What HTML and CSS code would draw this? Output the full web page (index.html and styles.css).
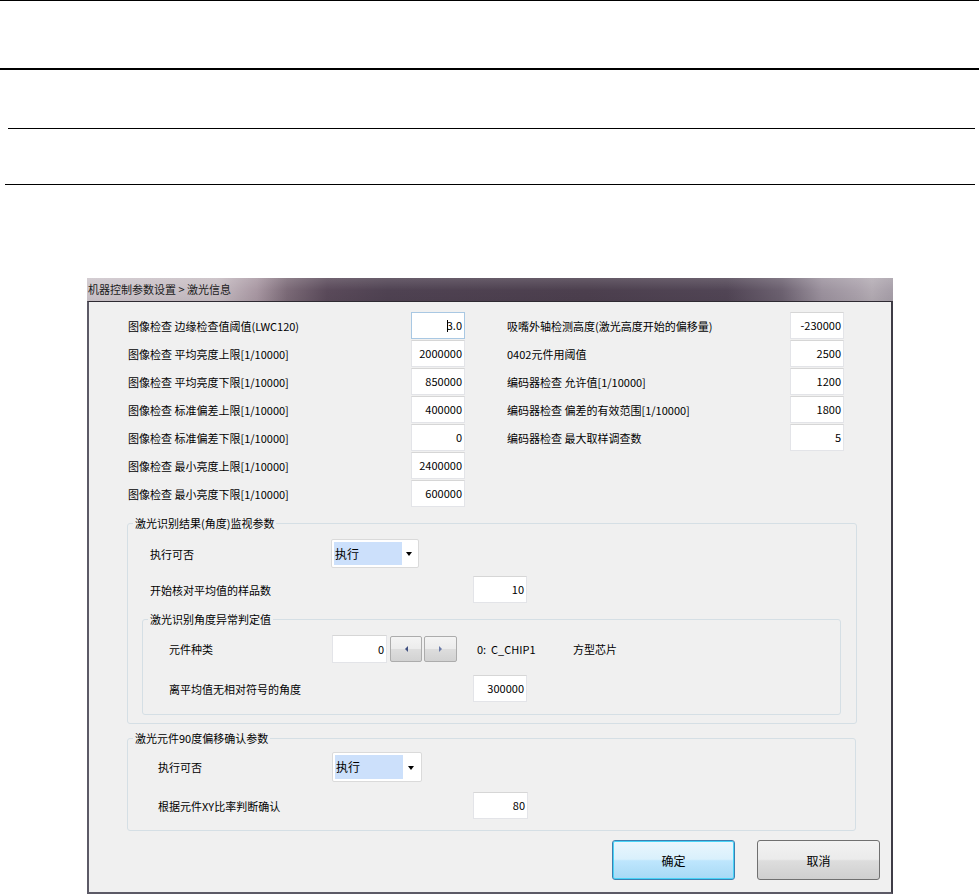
FILE: index.html
```html
<!DOCTYPE html>
<html lang="zh-CN">
<head>
<meta charset="utf-8">
<title>激光信息</title>
<link rel="stylesheet" href="styles.css">
</head>
<body>
<div class="rules">
  <div class="rule r1"></div>
  <div class="rule r2"></div>
  <div class="rule r3"></div>
  <div class="rule r4"></div>
</div>
<div class="window">
  <div class="titlebar">机器控制参数设置 &gt; 激光信息</div>
  <div class="client">
    <div class="params">
      <div class="col">
        <div class="row"><span class="lbl">图像检查 边缘检查值阈值(LWC120)</span><span class="field focus"><span class="caret"></span>3.0</span></div>
        <div class="row"><span class="lbl">图像检查 平均亮度上限[1/10000]</span><span class="field">2000000</span></div>
        <div class="row"><span class="lbl">图像检查 平均亮度下限[1/10000]</span><span class="field">850000</span></div>
        <div class="row"><span class="lbl">图像检查 标准偏差上限[1/10000]</span><span class="field">400000</span></div>
        <div class="row"><span class="lbl">图像检查 标准偏差下限[1/10000]</span><span class="field">0</span></div>
        <div class="row"><span class="lbl">图像检查 最小亮度上限[1/10000]</span><span class="field">2400000</span></div>
        <div class="row"><span class="lbl">图像检查 最小亮度下限[1/10000]</span><span class="field">600000</span></div>
      </div>
      <div class="col col-right">
        <div class="row"><span class="lbl">吸嘴外轴检测高度(激光高度开始的偏移量)</span><span class="field">-230000</span></div>
        <div class="row"><span class="lbl">0402元件用阈值</span><span class="field">2500</span></div>
        <div class="row"><span class="lbl">编码器检查 允许值[1/10000]</span><span class="field">1200</span></div>
        <div class="row"><span class="lbl">编码器检查 偏差的有效范围[1/10000]</span><span class="field">1800</span></div>
        <div class="row"><span class="lbl">编码器检查 最大取样调查数</span><span class="field">5</span></div>
      </div>
    </div>

    <fieldset class="group g1">
      <legend>激光识别结果(角度)监视参数</legend>
      <div class="grow g1-combo">
        <span class="glbl w181">执行可否</span>
        <span class="combo"><span class="combo-sel">执行</span><span class="combo-arrow"></span></span>
      </div>
      <div class="grow g1-num">
        <span class="glbl w323">开始核对平均值的样品数</span>
        <span class="field">10</span>
      </div>
      <fieldset class="group inner">
        <legend>激光识别角度异常判定值</legend>
        <div class="grow in-kind">
          <span class="glbl w163">元件种类</span>
          <span class="field f55 h28">0</span>
          <span class="spin spin-l"><span class="tri-l"></span></span>
          <span class="spin spin-r"><span class="tri-r"></span></span>
          <span class="kind-code">0:&nbsp;&nbsp;C_CHIP1</span>
          <span class="kind-name">方型芯片</span>
        </div>
        <div class="grow in-angle">
          <span class="glbl w304">离平均值无相对符号的角度</span>
          <span class="field">300000</span>
        </div>
      </fieldset>
    </fieldset>

    <fieldset class="group g2">
      <legend>激光元件90度偏移确认参数</legend>
      <div class="grow g2-combo">
        <span class="glbl w174">执行可否</span>
        <span class="combo c90"><span class="combo-sel">执行</span><span class="combo-arrow"></span></span>
      </div>
      <div class="grow g2-num">
        <span class="glbl w315">根据元件XY比率判断确认</span>
        <span class="field f55">80</span>
      </div>
    </fieldset>

    <div class="actions">
      <button class="btn btn-default" type="button">确定</button>
      <button class="btn" type="button">取消</button>
    </div>
  </div>
</div>
</body>
</html>
```
FILE: styles.css
```css
* { box-sizing: border-box; }

html, body {
  margin: 0;
  padding: 0;
  background: #ffffff;
}

body {
  width: 979px;
  height: 895px;
  overflow: hidden;
  font-family: "Noto Sans CJK SC", "Liberation Sans", sans-serif;
  font-size: 11px;
  color: #000;
}

/* top document rules */
.rule { height: 1px; background: #000; }
.r1 { margin-top: 0; }
.r2 { margin-top: 67px; height: 2px; }
.r3 { margin-top: 58px; margin-left: 8px; margin-right: 4px; }
.r4 { margin-top: 55px; margin-left: 5px; margin-right: 4px; }

/* dialog window */
.window {
  margin-top: 93px;
  margin-left: 87px;
  width: 806px;
}

.titlebar {
  height: 23px;
  line-height: 22px;
  padding-left: 1px;
  font-size: 11px;
  color: #1b1b1b;
  white-space: nowrap;
  background:
    linear-gradient(to bottom, rgba(255,255,255,0.14), rgba(255,255,255,0) 55%, rgba(0,0,0,0.04)),
    linear-gradient(to right,
      #cdc5cb 0px, #c6bcc2 130px, #a897a2 170px, #7b6a77 200px,
      #5a4a5a 240px, #4f4252 300px, #4c3f4e 500px, #514555 640px,
      #6c6170 695px, #9b919d 735px, #aaa1ab 770px, #b3abb3 785px, #a69ea8 806px);
}

.client {
  background: #f0f0f0;
  border-top: 1px solid #2e2a32;
  border-left: 2px solid #5c5a66;
  border-right: 2px solid #3e3c46;
  border-bottom: 2px solid #5c5a66;
  height: 593px;
  padding: 10px 0 0 39px;
}

/* top parameter columns */
.params { display: flex; }
.col { display: flex; flex-direction: column; gap: 1px; }
.col-right { margin-left: 42px; }

.row { display: flex; align-items: center; height: 27px; }
.lbl { width: 283px; white-space: nowrap; }

.field {
  display: inline-block;
  width: 54px;
  height: 27px;
  line-height: 25px;
  background: #fff;
  border: 1px solid #e3e4e8;
  border-top-color: #d6d6d6;
  text-align: right;
  padding-right: 2px;
  white-space: nowrap;
  flex: none;
}
.field.focus { border-color: #a9c8e3; }
.f55 { width: 55px; }
.h28 { height: 28px; line-height: 26px; }

.caret {
  display: inline-block;
  width: 1px;
  height: 12px;
  background: #000;
  vertical-align: -2px;
  margin-right: -1px;
}

/* group boxes */
.group {
  margin: 0;
  padding: 0;
  border: 1px solid #d5dfe5;
  border-radius: 3px;
  min-inline-size: 0;
}
.group legend {
  margin-left: 5px;
  padding: 0 2px;
  line-height: 14px;
  font-size: 11px;
}

.g1 {
  margin-top: 9px;
  margin-left: -1px;
  width: 730px;
  padding-bottom: 8px;
}
.g2 {
  margin-top: 7px;
  margin-left: -1px;
  width: 729px;
  padding-bottom: 11px;
}
.inner {
  margin-top: 9px;
  margin-left: 14px;
  width: 699px;
  padding-bottom: 12px;
}

.grow { display: flex; align-items: center; }
.glbl { white-space: nowrap; flex: none; }
.w181 { width: 181px; }
.w323 { width: 323px; }
.w163 { width: 163px; }
.w304 { width: 304px; }
.w174 { width: 174px; }
.w315 { width: 315px; }

.g1-combo { margin-top: 9px; height: 29px; padding-left: 22px; }
.g1-num { margin-top: 8px; height: 27px; padding-left: 22px; }
.in-kind { margin-top: 9px; height: 28px; padding-left: 26px; }
.in-angle { margin-top: 12px; height: 27px; padding-left: 26px; }
.g2-combo { margin-top: 7px; height: 30px; padding-left: 30px; }
.g2-num { margin-top: 10px; height: 27px; padding-left: 30px; }

/* combo box */
.combo {
  position: relative;
  display: flex;
  align-items: stretch;
  width: 88px;
  height: 29px;
  padding: 2px;
  background: #fff;
  border: 1px solid #dadada;
  border-radius: 2px;
  flex: none;
}
.combo.c90 { width: 90px; height: 30px; }
.combo-sel {
  width: 68px;
  background: #cce0fb;
  padding-left: 1px;
  line-height: 23px;
  font-size: 12px;
}
.combo-arrow {
  flex: 1;
  display: flex;
  align-items: center;
  justify-content: center;
}
.combo-arrow::before {
  content: "";
  width: 0;
  height: 0;
  border-left: 3.5px solid transparent;
  border-right: 3.5px solid transparent;
  border-top: 4px solid #000;
  margin-top: 1px;
}

/* spin buttons */
.spin {
  width: 32px;
  height: 26px;
  border: 1px solid #acacac;
  border-radius: 2px;
  background: linear-gradient(to bottom, #f4f4f4 0%, #ececec 48%, #dddddd 52%, #d2d2d2 100%);
  display: flex;
  align-items: center;
  justify-content: center;
  flex: none;
}
.spin-l { margin-left: 3px; }
.spin-r { margin-left: 2px; width: 33px; }
.tri-l {
  width: 0; height: 0;
  border-top: 3px solid transparent;
  border-bottom: 3px solid transparent;
  border-right: 3px solid #3f4f80;
}
.tri-r {
  width: 0; height: 0;
  border-top: 3px solid transparent;
  border-bottom: 3px solid transparent;
  border-left: 3px solid #6a7aa8;
}
.kind-code { margin-left: 20px; width: 96px; white-space: nowrap; }
.kind-name { white-space: nowrap; }

/* bottom buttons */
.actions {
  display: flex;
  justify-content: flex-end;
  gap: 22px;
  margin-top: 9px;
  padding-right: 11px;
}
.btn {
  width: 123px;
  height: 40px;
  margin: 0;
  padding: 0;
  font-family: "Noto Sans CJK SC", "Liberation Sans", sans-serif;
  font-size: 12px;
  color: #000;
  border: 1px solid #707070;
  border-radius: 3px;
  background: linear-gradient(to bottom, #f2f2f2 0%, #ebebeb 48%, #dddddd 52%, #cfcfcf 100%);
}
.btn-default {
  border-color: #3c7fb1;
  box-shadow: inset 0 0 0 1px #48d3f7;
  background: linear-gradient(to bottom, #eaf6fd 0%, #d9f0fc 48%, #bee6fd 52%, #a7d9f5 100%);
}
```
